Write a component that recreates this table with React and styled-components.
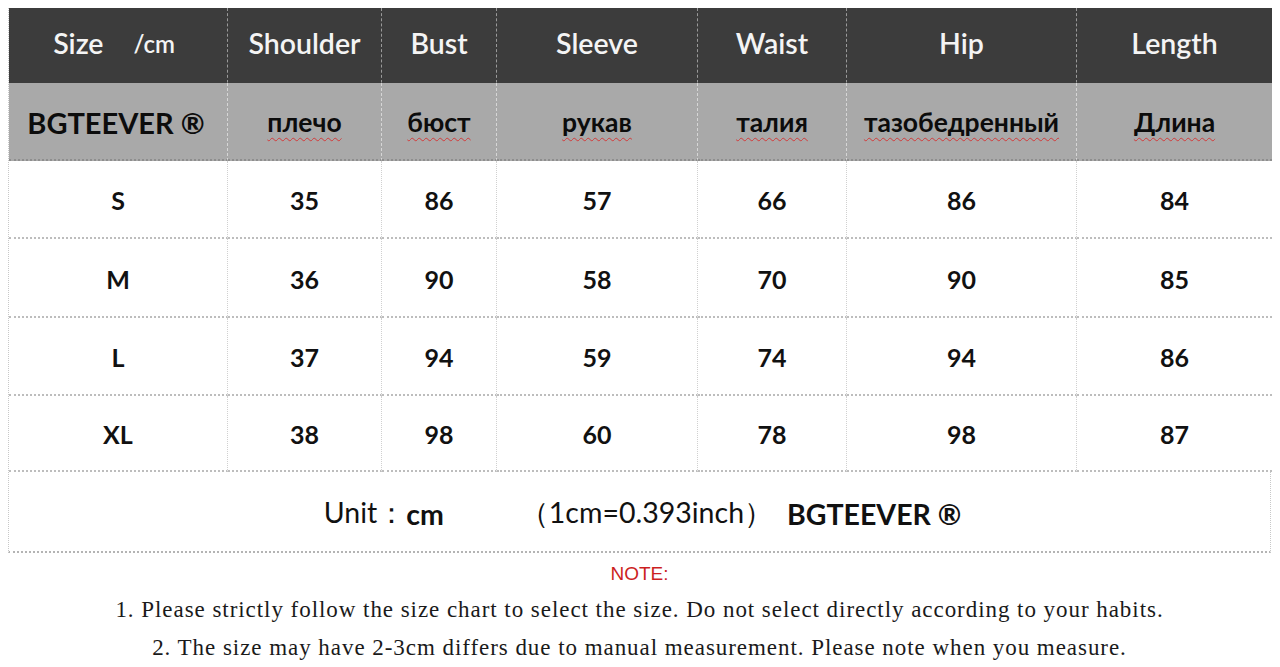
import React from 'react';
import styled, { createGlobalStyle, css } from 'styled-components';

const GlobalStyle = createGlobalStyle`
  html, body {
    margin: 0;
    padding: 0;
    background: #ffffff;
  }
  body {
    font-family: Lato, "Open Sans", sans-serif;
  }
`;

const columns = ['Shoulder', 'Bust', 'Sleeve', 'Waist', 'Hip', 'Length'];
const russian = ['плечо', 'бюст', 'рукав', 'талия', 'тазобедренный', 'Длина'];

const rows = [
  { size: 'S', values: [35, 86, 57, 66, 86, 84] },
  { size: 'M', values: [36, 90, 58, 70, 90, 85] },
  { size: 'L', values: [37, 94, 59, 74, 94, 86] },
  { size: 'XL', values: [38, 98, 60, 78, 98, 87] },
];

const App = () => {
  return (
    <>
      <GlobalStyle />
      <Page>
        <Chart>
          <Cell head first>
            Size<Unit>/cm</Unit>
          </Cell>
          {columns.map((c) => (
            <Cell head key={c}>
              {c}
            </Cell>
          ))}

          <Cell sub first>
            <Brand>BGTEEVER ®</Brand>
          </Cell>
          {russian.map((r) => (
            <Cell sub key={r}>
              <Spell>{r}</Spell>
            </Cell>
          ))}

          {rows.map((row) => (
            <React.Fragment key={row.size}>
              <Cell first>{row.size}</Cell>
              {row.values.map((v, i) => (
                <Cell key={i}>{v}</Cell>
              ))}
            </React.Fragment>
          ))}

          <Footer>
            <Regular>Unit：</Regular>
            <Bold>cm</Bold>
            <Regular wide>（1cm=0.393inch）</Regular>
            <Bold>BGTEEVER ®</Bold>
          </Footer>
        </Chart>

        <Notes>
          <NoteTitle>NOTE:</NoteTitle>
          <NoteLine>
            1. Please strictly follow the size chart to select the size. Do not
            select directly according to your habits.
          </NoteLine>
          <NoteLine>
            2. The size may have 2-3cm differs due to manual measurement. Please
            note when you measure.
          </NoteLine>
        </Notes>
      </Page>
    </>
  );
};

export default App;

const Page = styled.div`
  width: 1280px;
  height: 667px;
  padding: 8px 9px 0 8px;
  box-sizing: border-box;
  overflow: hidden;
`;

const Chart = styled.div`
  display: grid;
  grid-template-columns: 219px 154px 115px 201px 149px 230px 195px;
  grid-template-rows: 75px 78px 78px 79px 78px 76px 79px;
  border-left: 1px dotted #c8c8c8;
  border-right: 1px dotted #c8c8c8;
  border-bottom: 2px dotted #b4b4b4;
`;

const Cell = styled.div`
  display: flex;
  align-items: center;
  justify-content: center;
  box-sizing: border-box;
  border-right: 1px dotted #d0d0d0;
  border-bottom: 2px dotted #bdbdbd;
  background: #ffffff;
  color: #111111;
  font-family: Lato, "Open Sans", sans-serif;
  font-weight: 700;
  font-size: 25px;
  padding-top: 2px;
  &:nth-child(7n) {
    border-right: none;
  }
  ${(p) =>
    p.head &&
    css`
      background: #3c3c3c;
      color: #f4f4f4;
      font-weight: 600;
      font-size: 28.5px;
      border-right: 1px dashed #9a9a9a;
      border-bottom: 1px solid #3c3c3c;
      padding-top: 0;
      padding-bottom: 4px;
    `}
  ${(p) =>
    p.sub &&
    css`
      background: #a9a9a9;
      color: #0c0c0c;
      border-right: 1px dashed #d6d6d6;
      border-bottom: 2px dotted #8e8e8e;
      font-size: 26.5px;
    `}
`;

const Unit = styled.span`
  font-size: 24px;
  margin-left: 30px;
  margin-right: 8px;
`;

const Brand = styled.span`
  font-size: 29px;
  margin-right: 4px;
`;

const Spell = styled.span`
  text-decoration: underline wavy #d23a3a;
  text-decoration-thickness: 1px;
  text-underline-offset: 5px;
`;

const Footer = styled.div`
  grid-column: 1 / -1;
  display: flex;
  align-items: center;
  justify-content: center;
  padding-top: 4px;
  padding-left: 4px;
  color: #111111;
  font-family: Lato, "Open Sans", sans-serif;
  font-size: 28.5px;
`;

const Regular = styled.span`
  font-weight: 400;
  ${(p) =>
    p.wide &&
    css`
      margin-left: 76px;
      margin-right: 14px;
    `}
`;

const Bold = styled.span`
  font-weight: 700;
`;

const Notes = styled.div`
  display: flex;
  flex-direction: column;
  align-items: center;
  padding-top: 9px;
`;

const NoteTitle = styled.div`
  color: #cc1f1f;
  font-family: "Liberation Sans", Arial, sans-serif;
  font-size: 19px;
  line-height: 24px;
  margin-bottom: 5px;
`;

const NoteLine = styled.div`
  color: #1a1a1a;
  font-family: "Liberation Serif", serif;
  font-size: 23px;
  letter-spacing: 0.95px;
  line-height: 38px;
`;
